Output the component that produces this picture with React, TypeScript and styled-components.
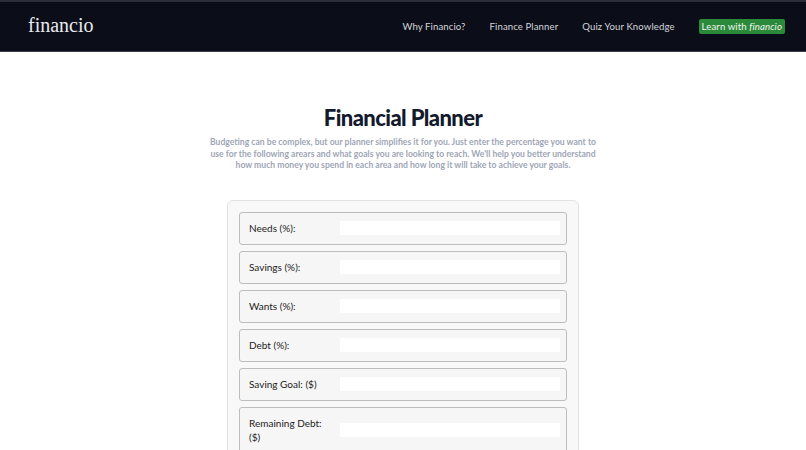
import React from 'react';
import styled, { createGlobalStyle } from 'styled-components';

const GlobalStyle = createGlobalStyle`
  body {
    margin: 0;
    background: #ffffff;
    font-family: 'Lato', 'Open Sans', sans-serif;
  }
`;

const Nav = styled.nav`
  height: 49px;
  background: #0b0e19;
  border-top: 2px solid #2a2e38;
  border-bottom: 1px solid #3b404b;
  display: flex;
  align-items: center;
  justify-content: space-between;
  padding: 0 21px 0 28px;
`;

const Logo = styled.div`
  font-family: 'Liberation Serif', serif;
  font-size: 20px;
  color: #e9eaee;
  padding-bottom: 2px;
`;

const Links = styled.ul`
  display: flex;
  align-items: center;
  gap: 24px;
  list-style: none;
  margin: 0;
  padding: 0;
`;

const Link = styled.li`
  font-size: 9.6px;
  letter-spacing: 0.1px;
  color: #d3d5da;
`;

const LearnBtn = styled.li`
  font-size: 9.6px;
  letter-spacing: 0.1px;
  color: #f2f5f2;
  background: #2b8a3a;
  border-radius: 2px;
  padding: 2px 3px;

  em {
    font-style: italic;
  }
`;

const Main = styled.main`
  display: flex;
  flex-direction: column;
  align-items: center;
  padding-top: 52px;
`;

const Title = styled.h1`
  margin: 0;
  font-size: 22px;
  letter-spacing: -0.6px;
  font-weight: 900;
  color: #131a2c;
`;

const Intro = styled.p`
  margin: 6px 0 0;
  width: 392px;
  text-align: center;
  font-size: 8.6px;
  line-height: 11.5px;
  font-weight: 700;
  color: #9ea6b5;
`;

const Card = styled.form`
  margin-top: 28px;
  width: 328px;
  padding: 11px;
  background: #f8f8f8;
  border: 1px solid #e2e2e2;
  border-radius: 6px;
  display: flex;
  flex-direction: column;
  gap: 6px;
`;

const Row = styled.label`
  display: flex;
  align-items: center;
  min-height: 31px;
  padding: 0 6px 0 9px;
  background: #f6f6f6;
  border: 1px solid #bdbdbd;
  border-radius: 3px;
`;

const Label = styled.span`
  width: 80px;
  margin-right: 11px;
  flex-shrink: 0;
  font-size: 10px;
  line-height: 14px;
  color: #222222;
  padding: 8px 0;
`;

const Field = styled.input`
  flex: 1;
  height: 14px;
  border: none;
  background: #ffffff;
  outline: none;
  padding: 0;
`;

const fields = [
  'Needs (%):',
  'Savings (%):',
  'Wants (%):',
  'Debt (%):',
  'Saving Goal: ($)',
  'Remaining Debt: ($)',
];

export default function App() {
  return (
    <>
      <GlobalStyle />
      <Nav>
        <Logo>financio</Logo>
        <Links>
          <Link>Why Financio?</Link>
          <Link>Finance Planner</Link>
          <Link>Quiz Your Knowledge</Link>
          <LearnBtn>
            Learn with <em>financio</em>
          </LearnBtn>
        </Links>
      </Nav>
      <Main>
        <Title>Financial Planner</Title>
        <Intro>
          Budgeting can be complex, but our planner simplifies it for you. Just
          enter the percentage you want to use for the following arears and
          what goals you are looking to reach. We'll help you better understand
          how much money you spend in each area and how long it will take to
          achieve your goals.
        </Intro>
        <Card>
          {fields.map((f) => (
            <Row key={f}>
              <Label>{f}</Label>
              <Field type="text" />
            </Row>
          ))}
        </Card>
      </Main>
    </>
  );
}
